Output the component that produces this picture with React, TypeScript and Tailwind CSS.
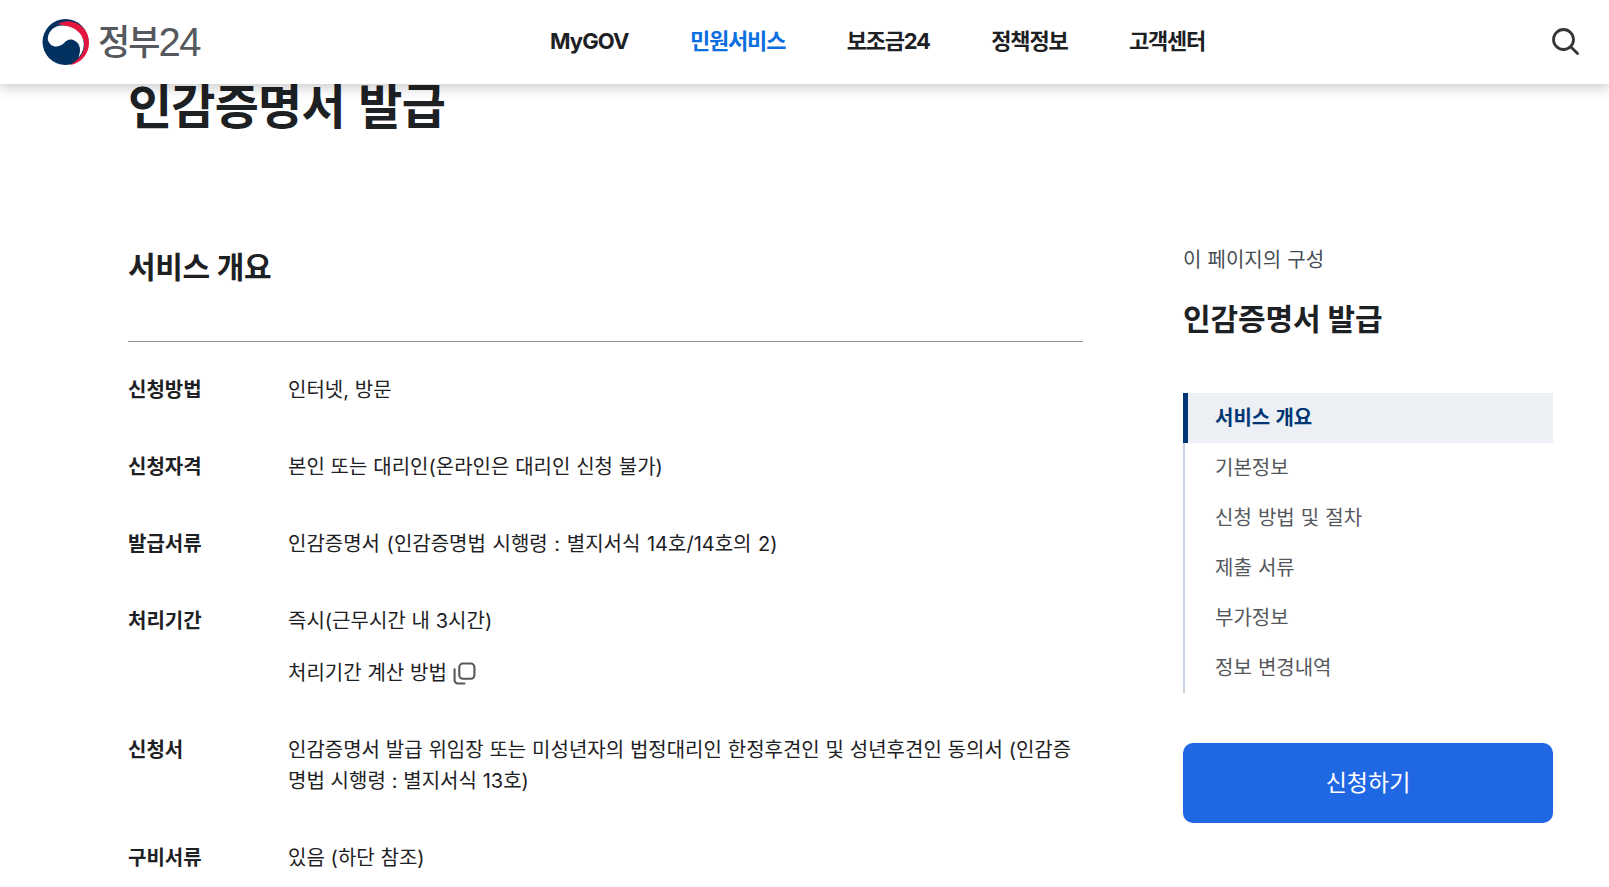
import React from "react";

const font = { fontFamily: 'Inter, "Noto Sans CJK KR", "Noto Sans", sans-serif' };

function Logo() {
  return (
    <div className="flex items-center">
      <svg width="48" height="46" viewBox="0 0 100 96" className="mr-[8px]">
        <circle cx="49" cy="48" r="48" fill="#02305f" />
        <path d="M32 11C60 -6 98 14 98 50C98 74 80 93 58 96C80 84 92 66 87 46C81 26 54 13 32 11Z" fill="#e2163f" />
        <path d="M12 40C14 22 30 12 46 14C68 16 86 30 87 50C88 64 82 74 76 80C82 66 80 52 69 46C59 40 52 44 46 50C38 58 26 60 18 53C14 49 12 45 12 40Z" fill="#ffffff" />
      </svg>
      <span className="text-[#55585c] text-[35px] font-medium leading-none tracking-[-2px]">정부</span>
      <span className="text-[#55585c] text-[40px] leading-none tracking-[-1.5px] font-['Liberation_Sans']">24</span>
    </div>
  );
}

function Row({ label, children, className }: { label: string; children: React.ReactNode; className?: string }) {
  return (
    <div className={"flex text-[20px] leading-[31px] [word-spacing:0.2px] " + (className ?? "")}>
      <div className="w-[160px] shrink-0 font-bold text-[#1e2124]">{label}</div>
      <div className="flex-1 text-[#1e2124]">{children}</div>
    </div>
  );
}

export default function App() {
  const navItems = ["MyGOV", "민원서비스", "보조금24", "정책정보", "고객센터"];
  const side = ["기본정보", "신청 방법 및 절차", "제출 서류", "부가정보", "정보 변경내역"];
  return (
    <div style={font} className="h-[887px] w-full overflow-hidden bg-white">
      <header className="relative z-10 flex h-[84px] items-center justify-between bg-white pl-[42px] pr-[30px] shadow-[0_4px_12px_rgba(0,0,0,0.2)]">
        <Logo />
        <nav className="absolute left-[550px] top-[25px] flex gap-[61.5px] text-[22px] font-bold tracking-[-1.2px] text-[#1e2124]">
          {navItems.map((n, i) => (
            <span key={n} className={i === 1 ? "text-[#0b6fe0]" : i === 0 ? "tracking-[-0.9px]" : ""}>{n}</span>
          ))}
        </nav>
        <svg width="30" height="30" viewBox="0 0 30 30" fill="none" stroke="#333639" strokeWidth="2.8" strokeLinecap="round" className="mr-[-1px] mt-[-3px]">
          <circle cx="13.5" cy="13.5" r="10" />
          <path d="M21 21l6.5 6.5" />
        </svg>
      </header>
      <main className="flex pl-[128px] pr-[56px]">
        <div className="w-[955px] shrink-0">
          <h1 className="pt-px text-[48px] font-bold leading-[44px] tracking-[-0.8px] text-[#1e2124] [word-spacing:3px]">인감증명서 발급</h1>
          <h2 className="mt-[117px] text-[30px] font-bold leading-[42px] tracking-[-0.3px] text-[#1e2124]">서비스 개요</h2>
          <div className="mt-[53px] mb-[33px] h-px bg-[#8a8d91]" />
          <Row label="신청방법" className="mb-[46px]">인터넷, 방문</Row>
          <Row label="신청자격" className="mb-[46px]">본인 또는 대리인(온라인은 대리인 신청 불가)</Row>
          <Row label="발급서류" className="mb-[46px] [word-spacing:1px]">인감증명서 (인감증명법 시행령 : 별지서식 14호/14호의 2)</Row>
          <Row label="처리기간" className="mb-[46px]">
            <div>즉시(근무시간 내 3시간)</div>
            <div className="mt-[21px] flex items-center gap-[6px]">
              처리기간 계산 방법
              <svg width="23" height="23" viewBox="0 0 22 22" fill="none" stroke="#55585c" strokeWidth="2" strokeLinecap="round" className="-mt-px">
                <rect x="6" y="1.5" width="14.5" height="14.5" rx="3.5" />
                <path d="M1.5 7v10.5a3 3 0 0 0 3 3H11" />
              </svg>
            </div>
          </Row>
          <Row label="신청서" className="mb-[46px]">
            인감증명서 발급 위임장 또는 미성년자의 법정대리인 한정후견인 및 성년후견인 동의서 (인감증명법 시행령 : 별지서식 13호)
          </Row>
          <Row label="구비서류">있음 (하단 참조)</Row>
        </div>
        <aside className="ml-[100px] flex-1 pt-[161px]">
          <div className="text-[20px] leading-[30px] text-[#464c53] [word-spacing:0.5px]">이 페이지의 구성</div>
          <div className="mt-[22px] text-[30px] font-bold leading-[44px] tracking-[-0.1px] text-[#1e2124]">인감증명서 발급</div>
          <ul className="mt-[52px] border-l-[2px] border-[#c6d3e2] text-[20px] [word-spacing:0.5px]">
            <li className="-ml-[2px] flex h-[50px] items-center border-l-[5px] border-[#003675] bg-[#ecf0f4] pl-[27px] font-bold text-[#003675]">서비스 개요</li>
            {side.map((s) => (
              <li key={s} className="flex h-[50px] items-center pl-[30px] text-[#55585c]">{s}</li>
            ))}
          </ul>
          <button className="mt-[50px] flex h-[80px] w-full items-center justify-center rounded-[10px] bg-[#2067e4] text-[23px] text-white">신청하기</button>
        </aside>
      </main>
    </div>
  );
}
